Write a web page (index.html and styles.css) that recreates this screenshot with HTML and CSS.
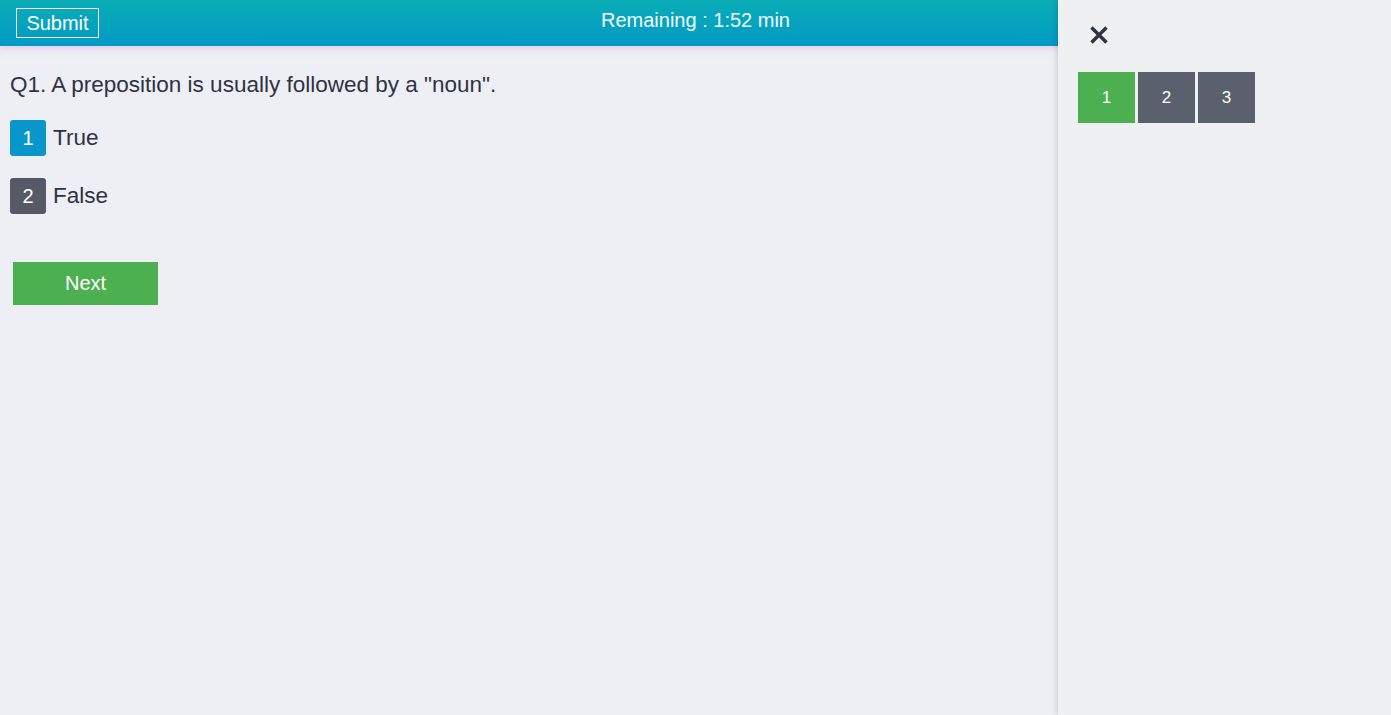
FILE: index.html
```html
<!DOCTYPE html>
<html>
<head>
<meta charset="utf-8">
<link rel="stylesheet" href="styles.css">
</head>
<body>
<div class="page">
  <header class="topbar">
    <button class="submit">Submit</button>
    <div class="timer">Remaining : 1:52 min</div>
  </header>
  <main class="main">
    <div class="question">Q1. A preposition is usually followed by a "noun".</div>
    <div class="options">
      <div class="option"><span class="badge badge-active">1</span><span class="opt-text">True</span></div>
      <div class="option"><span class="badge">2</span><span class="opt-text">False</span></div>
    </div>
    <button class="next">Next</button>
  </main>
  <aside class="sidebar">
    <div class="close">
      <svg width="20" height="20" viewBox="0 0 20 20"><path d="M2.5 2.5 L17.5 17.5 M17.5 2.5 L2.5 17.5" stroke="#2e3440" stroke-width="3.4" stroke-linecap="butt" fill="none"/></svg>
    </div>
    <div class="nav">
      <div class="nav-btn nav-current">1</div>
      <div class="nav-btn">2</div>
      <div class="nav-btn">3</div>
    </div>
  </aside>
</div>
</body>
</html>
```
FILE: styles.css
```css
* { box-sizing: border-box; }
html, body { margin: 0; padding: 0; }
body {
  font-family: "Liberation Sans", Arial, sans-serif;
  background: #eeeff5;
  color: #2d3343;
  width: 1391px;
  height: 715px;
  overflow: hidden;
}
.page { position: relative; width: 1391px; height: 715px; }
.topbar {
  height: 46px;
  background: linear-gradient(to bottom, #0aadb6 0%, #0399c6 100%);
  box-shadow: 0 3px 6px rgba(220, 180, 230, 0.55);
  display: flex;
  align-items: center;
  justify-content: center;
  position: relative;
}
.submit {
  position: absolute;
  left: 16px;
  top: 8px;
  height: 30px;
  width: 83px;
  background: transparent;
  border: 1px solid #ffffff;
  color: #ffffff;
  font-family: "Liberation Sans", Arial, sans-serif;
  font-size: 20px;
  padding: 0;
  line-height: 26px;
}
.timer {
  color: #f2fbff;
  font-size: 20px;
  margin-top: -5px;
}
.main { padding: 25px 10px 0 10px; width: 1057px; }
.question { font-size: 22.5px; line-height: 28px; }
.options { margin-top: 21px; display: flex; flex-direction: column; gap: 22px; }
.option { display: flex; align-items: center; height: 36px; }
.badge {
  width: 36px;
  height: 36px;
  border-radius: 3px;
  background: #545b67;
  color: #ffffff;
  font-size: 20px;
  display: flex;
  align-items: center;
  justify-content: center;
}
.badge-active { background: #0897c8; }
.opt-text { margin-left: 7px; font-size: 22.5px; margin-top: -1px; }
.next {
  margin-top: 48px;
  margin-left: 3px;
  width: 145px;
  height: 43px;
  background: #4caf50;
  border: none;
  color: #ffffff;
  font-family: "Liberation Sans", Arial, sans-serif;
  font-size: 20px;
  padding: 0;
  display: block;
}
.sidebar {
  position: absolute;
  top: 0;
  right: 0;
  width: 333px;
  height: 715px;
  background: #eff0f1;
  box-shadow: -2px 0 5px rgba(0, 0, 0, 0.12);
  padding: 25px 20px 0 20px;
}
.close { margin-left: 11px; height: 20px; display: flex; }
.nav { display: flex; gap: 3px; margin-top: 27px; }
.nav-btn {
  width: 57px;
  height: 51px;
  background: #5a606c;
  color: #ffffff;
  font-size: 17px;
  display: flex;
  align-items: center;
  justify-content: center;
}
.nav-current { background: #4caf50; }
```
